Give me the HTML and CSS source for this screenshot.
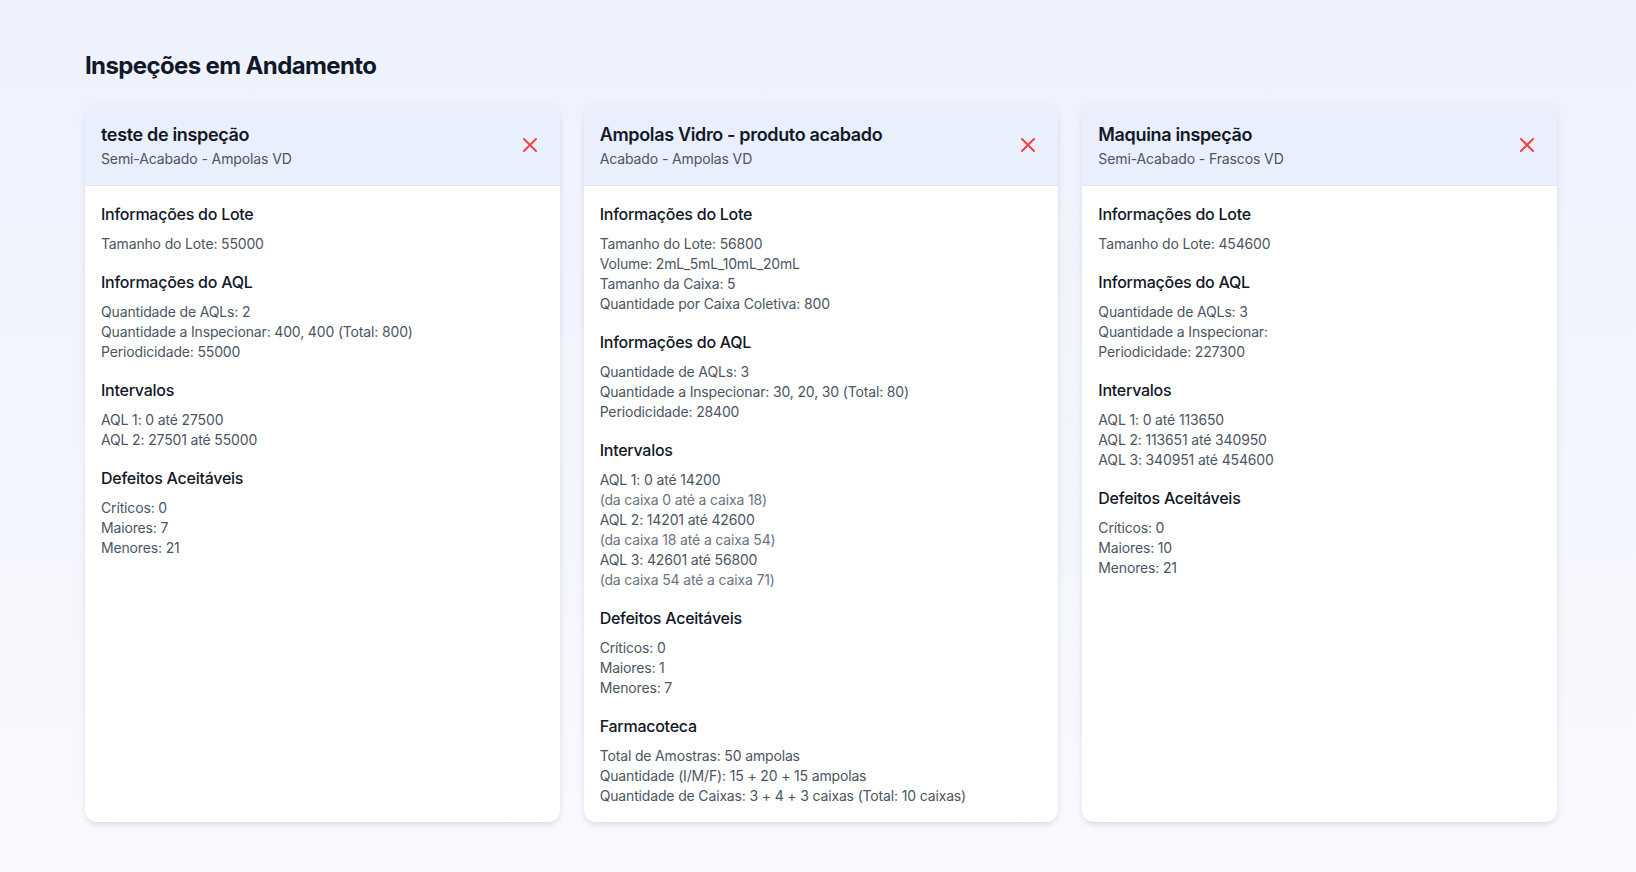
FILE: index.html
```html
<!DOCTYPE html>
<html lang="pt-BR">
<head>
<meta charset="utf-8">
<title>Inspeções em Andamento</title>
<link rel="stylesheet" href="styles.css">
</head>
<body>
<main class="page">
  <h1 class="page-title">Inspeções em Andamento</h1>
  <div class="grid">
    <section class="card">
      <header class="card-header">
        <div>
          <h2 class="card-title">teste de inspeção</h2>
          <p class="card-sub">Semi-Acabado - Ampolas VD</p>
        </div>
        <button class="close" aria-label="Fechar"><svg viewBox="0 0 24 24" width="24" height="24" fill="none" stroke="currentColor" stroke-width="2" stroke-linecap="round" stroke-linejoin="round"><path d="M6 18L18 6M6 6l12 12"/></svg></button>
      </header>
      <div class="card-body">
        <div class="section">
          <h3>Informações do Lote</h3>
          <p>Tamanho do Lote: 55000</p>
        </div>
        <div class="section">
          <h3>Informações do AQL</h3>
          <p>Quantidade de AQLs: 2</p>
          <p>Quantidade a Inspecionar: 400, 400 (Total: 800)</p>
          <p>Periodicidade: 55000</p>
        </div>
        <div class="section">
          <h3>Intervalos</h3>
          <p>AQL 1: 0 até 27500</p>
          <p>AQL 2: 27501 até 55000</p>
        </div>
        <div class="section">
          <h3>Defeitos Aceitáveis</h3>
          <p>Críticos: 0</p>
          <p>Maiores: 7</p>
          <p>Menores: 21</p>
        </div>
      </div>
    </section>

    <section class="card">
      <header class="card-header">
        <div>
          <h2 class="card-title">Ampolas Vidro - produto acabado</h2>
          <p class="card-sub">Acabado - Ampolas VD</p>
        </div>
        <button class="close" aria-label="Fechar"><svg viewBox="0 0 24 24" width="24" height="24" fill="none" stroke="currentColor" stroke-width="2" stroke-linecap="round" stroke-linejoin="round"><path d="M6 18L18 6M6 6l12 12"/></svg></button>
      </header>
      <div class="card-body">
        <div class="section">
          <h3>Informações do Lote</h3>
          <p>Tamanho do Lote: 56800</p>
          <p>Volume: 2mL_5mL_10mL_20mL</p>
          <p>Tamanho da Caixa: 5</p>
          <p>Quantidade por Caixa Coletiva: 800</p>
        </div>
        <div class="section">
          <h3>Informações do AQL</h3>
          <p>Quantidade de AQLs: 3</p>
          <p>Quantidade a Inspecionar: 30, 20, 30 (Total: 80)</p>
          <p>Periodicidade: 28400</p>
        </div>
        <div class="section">
          <h3>Intervalos</h3>
          <p>AQL 1: 0 até 14200</p>
          <p class="muted">(da caixa 0 até a caixa 18)</p>
          <p>AQL 2: 14201 até 42600</p>
          <p class="muted">(da caixa 18 até a caixa 54)</p>
          <p>AQL 3: 42601 até 56800</p>
          <p class="muted">(da caixa 54 até a caixa 71)</p>
        </div>
        <div class="section">
          <h3>Defeitos Aceitáveis</h3>
          <p>Críticos: 0</p>
          <p>Maiores: 1</p>
          <p>Menores: 7</p>
        </div>
        <div class="section">
          <h3>Farmacoteca</h3>
          <p>Total de Amostras: 50 ampolas</p>
          <p>Quantidade (I/M/F): 15 + 20 + 15 ampolas</p>
          <p>Quantidade de Caixas: 3 + 4 + 3 caixas (Total: 10 caixas)</p>
        </div>
      </div>
    </section>

    <section class="card">
      <header class="card-header">
        <div>
          <h2 class="card-title">Maquina inspeção</h2>
          <p class="card-sub">Semi-Acabado - Frascos VD</p>
        </div>
        <button class="close" aria-label="Fechar"><svg viewBox="0 0 24 24" width="24" height="24" fill="none" stroke="currentColor" stroke-width="2" stroke-linecap="round" stroke-linejoin="round"><path d="M6 18L18 6M6 6l12 12"/></svg></button>
      </header>
      <div class="card-body">
        <div class="section">
          <h3>Informações do Lote</h3>
          <p>Tamanho do Lote: 454600</p>
        </div>
        <div class="section">
          <h3>Informações do AQL</h3>
          <p>Quantidade de AQLs: 3</p>
          <p>Quantidade a Inspecionar: </p>
          <p>Periodicidade: 227300</p>
        </div>
        <div class="section">
          <h3>Intervalos</h3>
          <p>AQL 1: 0 até 113650</p>
          <p>AQL 2: 113651 até 340950</p>
          <p>AQL 3: 340951 até 454600</p>
        </div>
        <div class="section">
          <h3>Defeitos Aceitáveis</h3>
          <p>Críticos: 0</p>
          <p>Maiores: 10</p>
          <p>Menores: 21</p>
        </div>
      </div>
    </section>
  </div>
</main>
</body>
</html>
```

FILE: styles.css
```css
* { box-sizing: border-box; }
html, body { margin: 0; padding: 0; }
body {
  min-height: 872px;
  font-family: Inter, "Noto Sans", "Liberation Sans", sans-serif;
  background: linear-gradient(180deg, #eef2fd 0%, #f4f6fd 60%, #f9fafd 100%);
  color: #111827;
}
.page {
  padding: 50px 79px 48px 85px;
}
.page-title {
  margin: 0 0 23px;
  font-size: 24px;
  line-height: 32px;
  font-weight: 700;
  letter-spacing: -0.026em;
  color: #111827;
}
.grid {
  display: grid;
  grid-template-columns: repeat(3, 1fr);
  gap: 24px;
}
.card {
  background: #ffffff;
  border-radius: 12px;
  box-shadow: 0 4px 6px -1px rgba(0,0,0,0.08), 0 2px 4px -2px rgba(0,0,0,0.06), 0 0 12px rgba(30,60,140,0.04);
  overflow: hidden;
}
.card-header {
  display: flex;
  align-items: center;
  justify-content: space-between;
  padding: 16px;
  background: #e9effc;
  border-bottom: 1px solid #e2e6ee;
}
.card-title {
  margin: 0;
  font-size: 18px;
  line-height: 28px;
  font-weight: 600;
  letter-spacing: -0.019em;
  color: #111827;
}
.card-sub {
  margin: 0;
  font-size: 14px;
  line-height: 20px;
  letter-spacing: -0.008em;
  color: #4b5563;
}
.close {
  width: 24px;
  height: 24px;
  padding: 0;
  margin-right: 2px;
  border: 0;
  background: none;
  color: #ef4444;
  display: flex;
}
.card-body {
  padding: 16px;
  display: flex;
  flex-direction: column;
  gap: 16px;
}
.section h3 {
  margin: 0 0 8px;
  font-size: 16px;
  line-height: 24px;
  font-weight: 500;
  letter-spacing: -0.016em;
  color: #111827;
}
.section p {
  margin: 0;
  font-size: 14px;
  line-height: 20px;
  letter-spacing: -0.011em;
  color: #4b5563;
}
.section p.muted {
  color: #6b7280;
}
```
